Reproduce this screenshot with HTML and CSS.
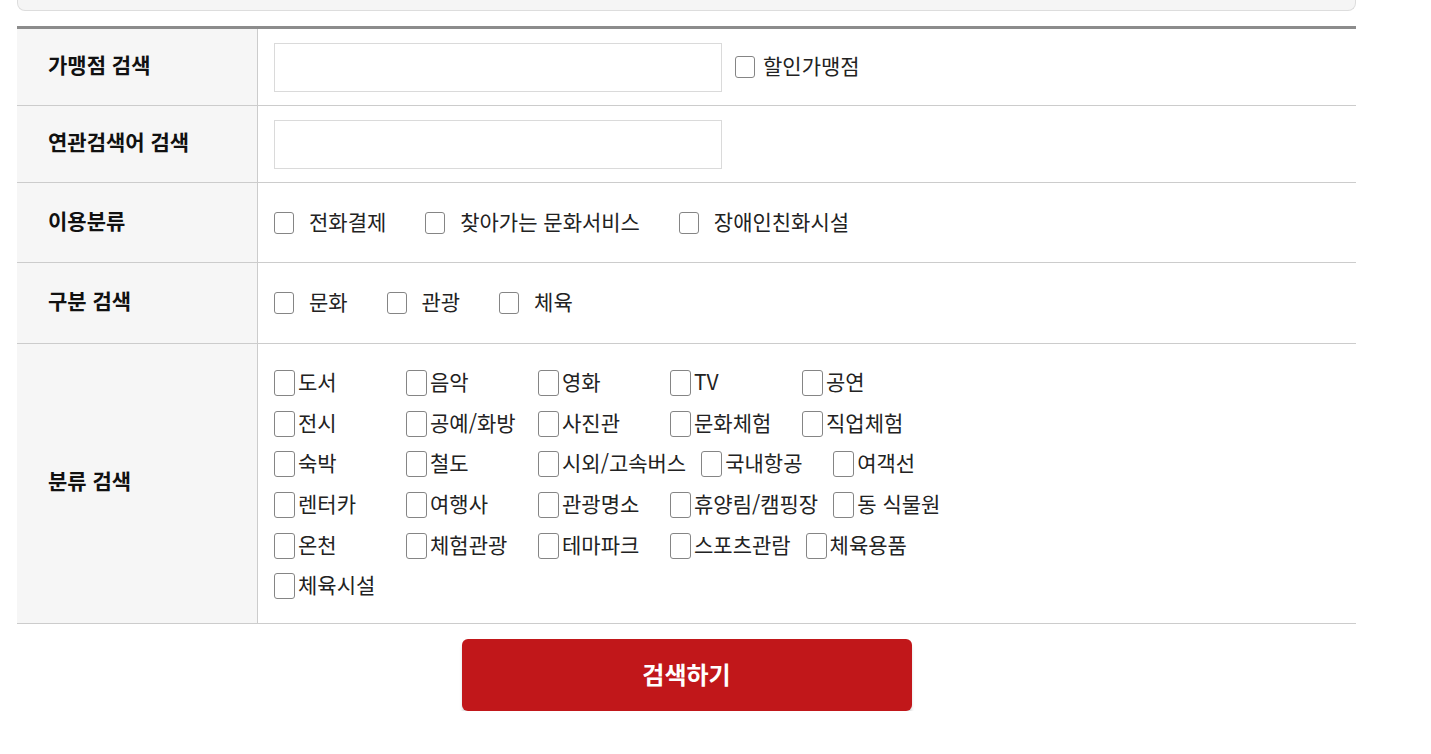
FILE: index.html
```html
<!DOCTYPE html>
<html lang="ko">
<head>
    <meta charset="UTF-8">
    <meta name="viewport" content="width=device-width, initial-scale=1.0">
    <title>가맹점 검색</title>
    <link rel="stylesheet" href="styles.css">
</head>
<body>

    <div class="wrap">
        <div class="info-box"></div>

        <table class="search-table">
            <tr class="row-input">
                <th>가맹점 검색</th>
                <td>
                    <input type="text" class="txt"><label class="chk chk-side"><input type="checkbox"><span>할인가맹점</span></label>
                </td>
            </tr>
            <tr class="row-input">
                <th>연관검색어 검색</th>
                <td><input type="text" class="txt"></td>
            </tr>
            <tr class="row-line">
                <th>이용분류</th>
                <td>
                    <label class="chk"><input type="checkbox"><span>전화결제</span></label>
                    <label class="chk"><input type="checkbox"><span>찾아가는 문화서비스</span></label>
                    <label class="chk"><input type="checkbox"><span>장애인친화시설</span></label>
                </td>
            </tr>
            <tr class="row-line row-type">
                <th>구분 검색</th>
                <td>
                    <label class="chk"><input type="checkbox"><span>문화</span></label>
                    <label class="chk"><input type="checkbox"><span>관광</span></label>
                    <label class="chk"><input type="checkbox"><span>체육</span></label>
                </td>
            </tr>
            <tr class="row-grid">
                <th>분류 검색</th>
                <td>
                    <div class="cate-list" id="cate-list"></div>
                </td>
            </tr>
        </table>

        <div class="btn-area">
            <button class="btn-search">검색하기</button>
        </div>
    </div>

    <script>
        // 분류 목록
        const categories = [
            '도서', '음악', '영화', 'TV', '공연',
            '전시', '공예/화방', '사진관', '문화체험', '직업체험',
            '숙박', '철도', '시외/고속버스', '국내항공', '여객선',
            '렌터카', '여행사', '관광명소', '휴양림/캠핑장', '동 식물원',
            '온천', '체험관광', '테마파크', '스포츠관람', '체육용품',
            '체육시설'
        ];

        const list = document.getElementById('cate-list');
        categories.forEach(name => {
            const item = document.createElement('label');
            item.classList.add('cate-item');
            item.innerHTML = `<input type="checkbox"><span>${name}</span>`;
            list.appendChild(item);
        });
    </script>

</body>
</html>
```

FILE: styles.css
```css
body {
    margin: 0;
    font-family: "Noto Sans CJK KR", "Noto Sans", sans-serif;
    color: #222;
    background: #fff;
}
.wrap {
    width: 1339px;
    margin-left: 17px;
}
.info-box {
    height: 10px;
    background: #f5f5f5;
    border: 1px solid #ddd;
    border-top: none;
    border-radius: 0 0 8px 8px;
}
.search-table {
    width: 100%;
    margin-top: 15px;
    border-collapse: collapse;
    border-top: 3px solid #8c8c8c;
}
.search-table th {
    width: 209px;
    padding: 0 0 6px 31px;
    background: #f6f6f6;
    border-right: 1px solid #ccc;
    border-bottom: 1px solid #ccc;
    text-align: left;
    font-size: 21px;
    font-weight: bold;
    color: #111;
}
.search-table td {
    padding: 0 16px;
    border-bottom: 1px solid #ccc;
    font-size: 21px;
}
.row-input td {
    height: 76px;
}
.row-line td {
    height: 79px;
}
.row-type td {
    height: 80px;
}
.row-grid td {
    padding-top: 19px;
    padding-bottom: 16px;
}
.txt {
    width: 448px;
    height: 49px;
    box-sizing: border-box;
    border: 1px solid #dadada;
    vertical-align: middle;
    font-size: 16px;
    padding: 0 10px;
}
input[type="checkbox"] {
    appearance: none;
    -webkit-appearance: none;
    box-sizing: border-box;
    margin: 0;
    background: #fff;
    border: 1px solid #858585;
    border-radius: 3px;
    flex: none;
}
.chk {
    display: inline-flex;
    align-items: center;
    margin-right: 33px;
    vertical-align: middle;
    line-height: 40px;
}
.chk span {
    padding-bottom: 4px;
}
.chk input {
    width: 20px;
    height: 22px;
    margin-right: 15px;
}
.chk-side {
    margin-left: 13px;
}
.chk-side input {
    margin-right: 8px;
}
.cate-list {
    display: flex;
    flex-wrap: wrap;
    width: 700px;
    line-height: 32px;
}
.cate-item {
    display: flex;
    align-items: center;
    height: 40.6px;
    min-width: 117px;
    margin-right: 15px;
}
.cate-item span {
    padding-bottom: 4px;
}
.cate-item input {
    width: 21px;
    height: 26px;
    margin-right: 3px;
}
.btn-area {
    text-align: center;
    margin-top: 15px;
}
.btn-search {
    width: 450px;
    height: 72px;
    background-color: #c1171a;
    color: #fff;
    border: none;
    border-radius: 6px;
    box-shadow: 0 4px 3px rgba(0,0,0,0.15);
    font-family: "Noto Sans CJK KR", sans-serif;
    font-size: 24px;
    font-weight: bold;
    padding-bottom: 4px;
    cursor: pointer;
}
```
